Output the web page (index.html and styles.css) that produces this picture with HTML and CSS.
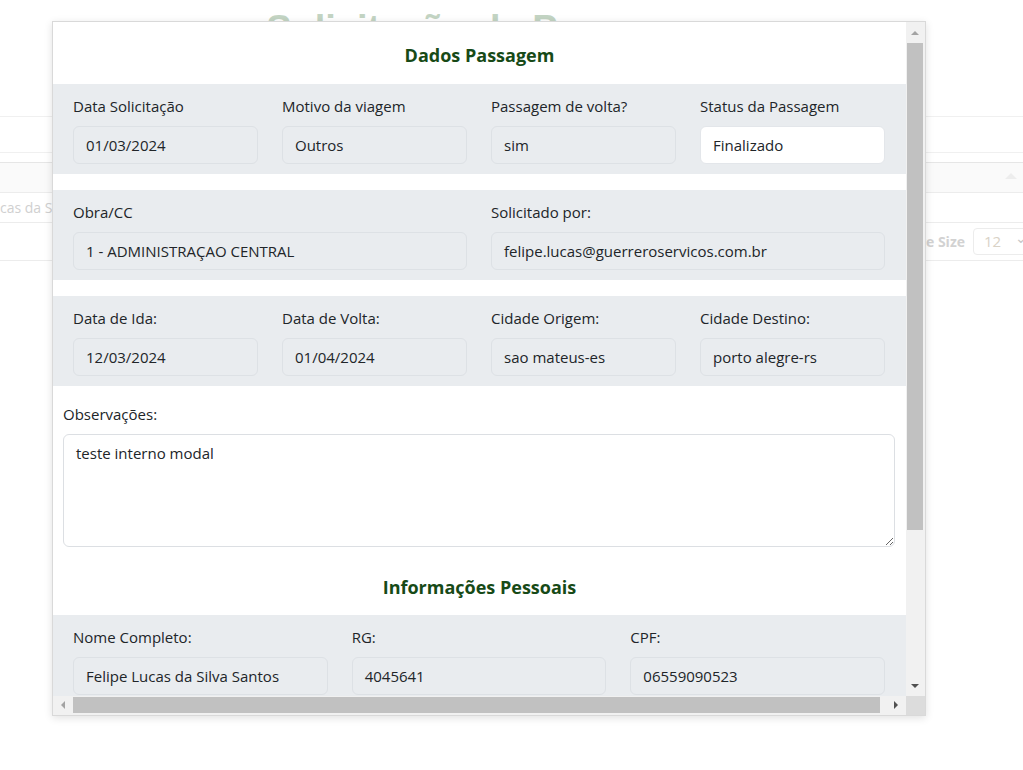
FILE: index.html
```html
<!DOCTYPE html>
<html lang="pt-BR">
<head>
<meta charset="utf-8">
<title>Solicitação de Passagens</title>
<link rel="stylesheet" href="styles.css">
</head>
<body>
<div class="page">
  <div class="bg-head"><h1 class="bg-title">Solicitação de Passagens</h1></div>
  <div class="bg-toolbar"></div>
  <div class="bg-thead"><span class="sort-tri"></span></div>
  <div class="bg-filter"><span class="bg-filter-text">cas da Silva</span></div>
  <div class="bg-pager">
    <span class="pager-label">Page Size</span>
    <span class="pager-select">12 <span class="chev">&#8964;</span></span>
  </div>
</div>

<div class="modal">
  <div class="modal-body">
    <h2 class="section-title">Dados Passagem</h2>

    <div class="band cols-4">
      <div class="field"><label>Data Solicitação</label><div class="input">01/03/2024</div></div>
      <div class="field"><label>Motivo da viagem</label><div class="input">Outros</div></div>
      <div class="field"><label>Passagem de volta?</label><div class="input">sim</div></div>
      <div class="field"><label>Status da Passagem</label><div class="input input-white">Finalizado</div></div>
    </div>

    <div class="band cols-2">
      <div class="field"><label>Obra/CC</label><div class="input">1 - ADMINISTRAÇAO CENTRAL</div></div>
      <div class="field"><label>Solicitado por:</label><div class="input">felipe.lucas@guerreroservicos.com.br</div></div>
    </div>

    <div class="band cols-4">
      <div class="field"><label>Data de Ida:</label><div class="input">12/03/2024</div></div>
      <div class="field"><label>Data de Volta:</label><div class="input">01/04/2024</div></div>
      <div class="field"><label>Cidade Origem:</label><div class="input">sao mateus-es</div></div>
      <div class="field"><label>Cidade Destino:</label><div class="input">porto alegre-rs</div></div>
    </div>

    <div class="obs">
      <label>Observações:</label>
      <textarea class="textarea" readonly>teste interno modal</textarea>
    </div>

    <h2 class="section-title second">Informações Pessoais</h2>

    <div class="band cols-3">
      <div class="field"><label>Nome Completo:</label><div class="input">Felipe Lucas da Silva Santos</div></div>
      <div class="field"><label>RG:</label><div class="input">4045641</div></div>
      <div class="field"><label>CPF:</label><div class="input">06559090523</div></div>
    </div>
  </div>

  <div class="vscroll">
    <div class="sb-btn"><span class="tri tri-up"></span></div>
    <div class="vtrack"><div class="vthumb"></div></div>
    <div class="sb-btn"><span class="tri tri-down"></span></div>
  </div>
  <div class="hscroll">
    <div class="sb-btn-h"><span class="tri tri-left"></span></div>
    <div class="htrack"><div class="hthumb"></div></div>
    <div class="sb-btn-h"><span class="tri tri-right"></span></div>
  </div>
  <div class="corner"></div>
</div>
</body>
</html>
```

FILE: styles.css
```css
* { box-sizing: border-box; }

html, body {
  margin: 0;
  padding: 0;
  background: #ffffff;
}

body {
  font-family: "Open Sans", "Noto Sans", Arial, sans-serif;
  font-size: 15px;
  color: #212529;
  width: 1023px;
  height: 770px;
  overflow: hidden;
  position: relative;
}

/* ---------- faded background page ---------- */
.page {
  width: 1023px;
}

.bg-head {
  height: 116px;
}

.bg-title {
  margin: 0;
  height: 21px;
  overflow: hidden;
  padding: 6px 26px 0 0;
  text-align: center;
  font-family: "Liberation Sans", Arial, sans-serif;
  font-size: 38px;
  font-weight: bold;
  color: #c3d4c3;
  line-height: 46px;
}

.bg-toolbar {
  height: 37px;
  border-top: 1px solid #f0f0f0;
  border-bottom: 1px solid #f0f0f0;
}

.bg-thead {
  margin-top: 9px;
  height: 31px;
  background: #fafafa;
  border-top: 1px solid #e6e6e6;
  border-bottom: 1px solid #ececec;
  position: relative;
}

.sort-tri {
  position: absolute;
  right: 6px;
  top: 10px;
  width: 0;
  height: 0;
  border-left: 6px solid transparent;
  border-right: 6px solid transparent;
  border-bottom: 6px solid #ededed;
}

.bg-filter {
  height: 30px;
  border-bottom: 1px solid #ececec;
  display: flex;
  align-items: center;
}

.bg-filter-text {
  font-size: 14px;
  color: #d0d0d0;
}

.bg-pager {
  height: 38px;
  border-bottom: 1px solid #ececec;
  display: flex;
  align-items: center;
  justify-content: flex-end;
  gap: 8px;
}

.pager-label {
  font-size: 14px;
  font-weight: bold;
  color: #d2d2d2;
}

.pager-select {
  width: 56px;
  height: 27px;
  border: 1px solid #ececec;
  border-radius: 4px;
  margin-right: -6px;
  padding-left: 10px;
  font-size: 15px;
  color: #d9d2c6;
  line-height: 25px;
  display: flex;
  gap: 14px;
}

.chev {
  color: #c8c8c8;
  font-size: 14px;
  line-height: 18px;
}

/* ---------- modal ---------- */
.modal {
  position: absolute;
  left: 52px;
  top: 21px;
  width: 874px;
  height: 695px;
  background: #ffffff;
  border: 1px solid #d9d9d9;
  box-shadow: 0 2px 8px rgba(0, 0, 0, 0.12);
  display: grid;
  grid-template-columns: 853px 19px;
  grid-template-rows: 674px 19px;
}

.modal-body {
  overflow: hidden;
  min-height: 0;
}

.section-title {
  margin: 0;
  padding: 21px 0 17px;
  text-align: center;
  font-size: 18px;
  line-height: 24px;
  font-weight: bold;
  color: #174a17;
}

.section-title.second {
  padding: 28px 0 16px;
}

.band {
  background: #e9ecef;
  padding: 10px 21px 10px 20px;
  display: grid;
  column-gap: 24px;
  margin-bottom: 16px;
}

.cols-4 { grid-template-columns: repeat(4, 1fr); }
.cols-2 { grid-template-columns: repeat(2, 1fr); }
.cols-3 { grid-template-columns: repeat(3, 1fr); }

.field label,
.obs label {
  display: block;
  line-height: 24px;
  margin-bottom: 8px;
}

.input {
  height: 38px;
  border: 1px solid #dde1e5;
  border-radius: 6px;
  background: #e9ecef;
  padding: 0 12px;
  line-height: 36px;
  white-space: nowrap;
  overflow: hidden;
}

.input-white {
  background: #ffffff;
  border-color: #e3e6ea;
}

.obs {
  padding: 0 11px 0 10px;
}

.textarea {
  display: block;
  width: 100%;
  height: 113px;
  border: 1px solid #dcdfe3;
  border-radius: 6px;
  padding: 6px 12px;
  font: inherit;
  line-height: 24px;
  color: #212529;
  background: #ffffff;
  resize: vertical;
  outline: none;
}

/* ---------- fake scrollbars ---------- */
.vscroll {
  background: #f1f1f1;
  display: flex;
  flex-direction: column;
}

.sb-btn {
  height: 21px;
  display: flex;
  align-items: center;
  justify-content: center;
  padding-right: 2px;
}

.vtrack {
  flex: 1;
  padding: 0 2px 0 1px;
}

.vthumb {
  height: 487px;
  background: #c1c1c1;
}

.hscroll {
  background: #f1f1f1;
  display: flex;
}

.sb-btn-h {
  width: 20px;
  display: flex;
  align-items: center;
  justify-content: center;
  padding-bottom: 2px;
}

.htrack {
  flex: 1;
  padding: 1px 0 2px;
}

.hthumb {
  height: 100%;
  width: 807px;
  background: #c1c1c1;
}

.corner {
  background: #dcdcdc;
}

.tri {
  width: 0;
  height: 0;
  display: block;
}

.tri-up {
  border-left: 4px solid transparent;
  border-right: 4px solid transparent;
  border-bottom: 4px solid #a3a3a3;
}

.tri-down {
  border-left: 4px solid transparent;
  border-right: 4px solid transparent;
  border-top: 4px solid #505050;
}

.tri-left {
  border-top: 4px solid transparent;
  border-bottom: 4px solid transparent;
  border-right: 4px solid #a3a3a3;
}

.tri-right {
  border-top: 4px solid transparent;
  border-bottom: 4px solid transparent;
  border-left: 4px solid #505050;
}
```
